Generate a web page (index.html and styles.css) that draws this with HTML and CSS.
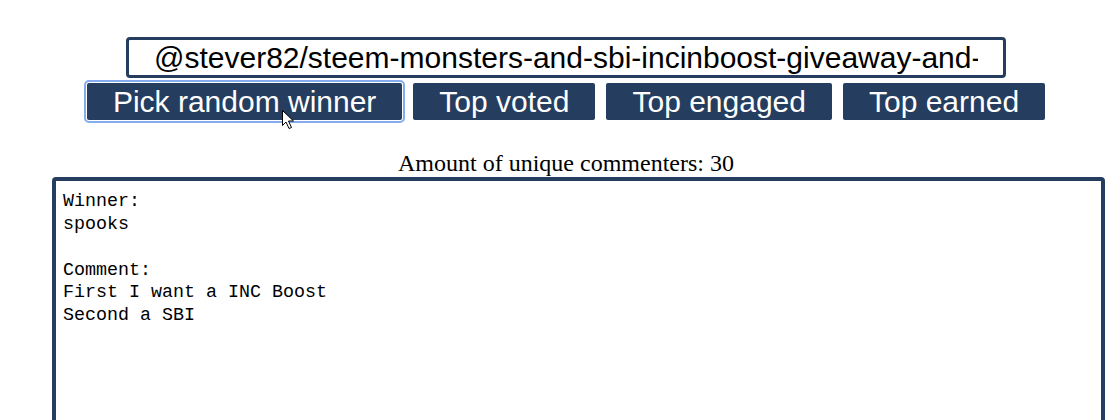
FILE: index.html
```html
<!DOCTYPE html>
<html>
<head>
<meta charset="utf-8">
<link rel="stylesheet" href="styles.css">
</head>
<body>
<div class="top">
  <input class="permlink" type="text" value="@stever82/steem-monsters-and-sbi-incinboost-giveaway-and-contest">
  <div class="actions">
    <button class="btn focused">Pick random winner</button>
    <button class="btn">Top voted</button>
    <button class="btn">Top engaged</button>
    <button class="btn">Top earned</button>
  </div>
  <div class="count">Amount of unique commenters: 30</div>
</div>
<textarea class="result" readonly>Winner:
spooks

Comment:
First I want a INC Boost
Second a SBI</textarea>
<svg class="cursor" width="14" height="21" viewBox="0 0 14 21"><path d="M1.5 1.5 V16.5 L5 13 L8 19.5 L10.5 18.5 L7.5 12 H12.5 Z" fill="#fff" stroke="#000" stroke-width="1" stroke-linejoin="miter"/></svg>
</body>
</html>
```
FILE: styles.css
```css
html { overflow: hidden; }
body {
  margin: 0;
  background: #fff;
  position: relative;
  height: 420px;
}
.top {
  display: flex;
  flex-direction: column;
  align-items: center;
  padding-left: 13px;
}
.permlink {
  margin-top: 37px;
  width: 880px;
  height: 41px;
  box-sizing: border-box;
  border: 3px solid #253d5e;
  border-radius: 4px;
  padding: 0 25px;
  font-family: "Liberation Sans", Arial, sans-serif;
  font-size: 30px;
  color: #000;
  background: #fff;
  outline: none;
}
.actions {
  display: flex;
  gap: 11px;
  margin-top: 5px;
}
.btn {
  height: 37px;
  padding: 0 26px;
  border: none;
  border-radius: 2px;
  background: #253d5e;
  color: #fff;
  font-family: "Liberation Sans", Arial, sans-serif;
  font-size: 30px;
  line-height: 35px;
}
.btn.focused {
  outline: 2px solid #86acf0;
  outline-offset: 1px;
}
.count {
  margin-top: 30px;
  font-family: "Liberation Serif", "Times New Roman", serif;
  font-size: 24px;
  line-height: 27px;
  color: #000;
}
.result {
  display: block;
  margin-left: 52px;
  width: 1053px;
  height: 320px;
  box-sizing: border-box;
  border: 4px solid #253d5e;
  border-radius: 4px;
  padding: 10px 7px;
  font-family: "Liberation Mono", "DejaVu Sans Mono", monospace;
  font-size: 18.33px;
  line-height: 22.85px;
  color: #000;
  resize: none;
  outline: none;
}
.cursor {
  position: absolute;
  left: 281px;
  top: 109px;
}
```
